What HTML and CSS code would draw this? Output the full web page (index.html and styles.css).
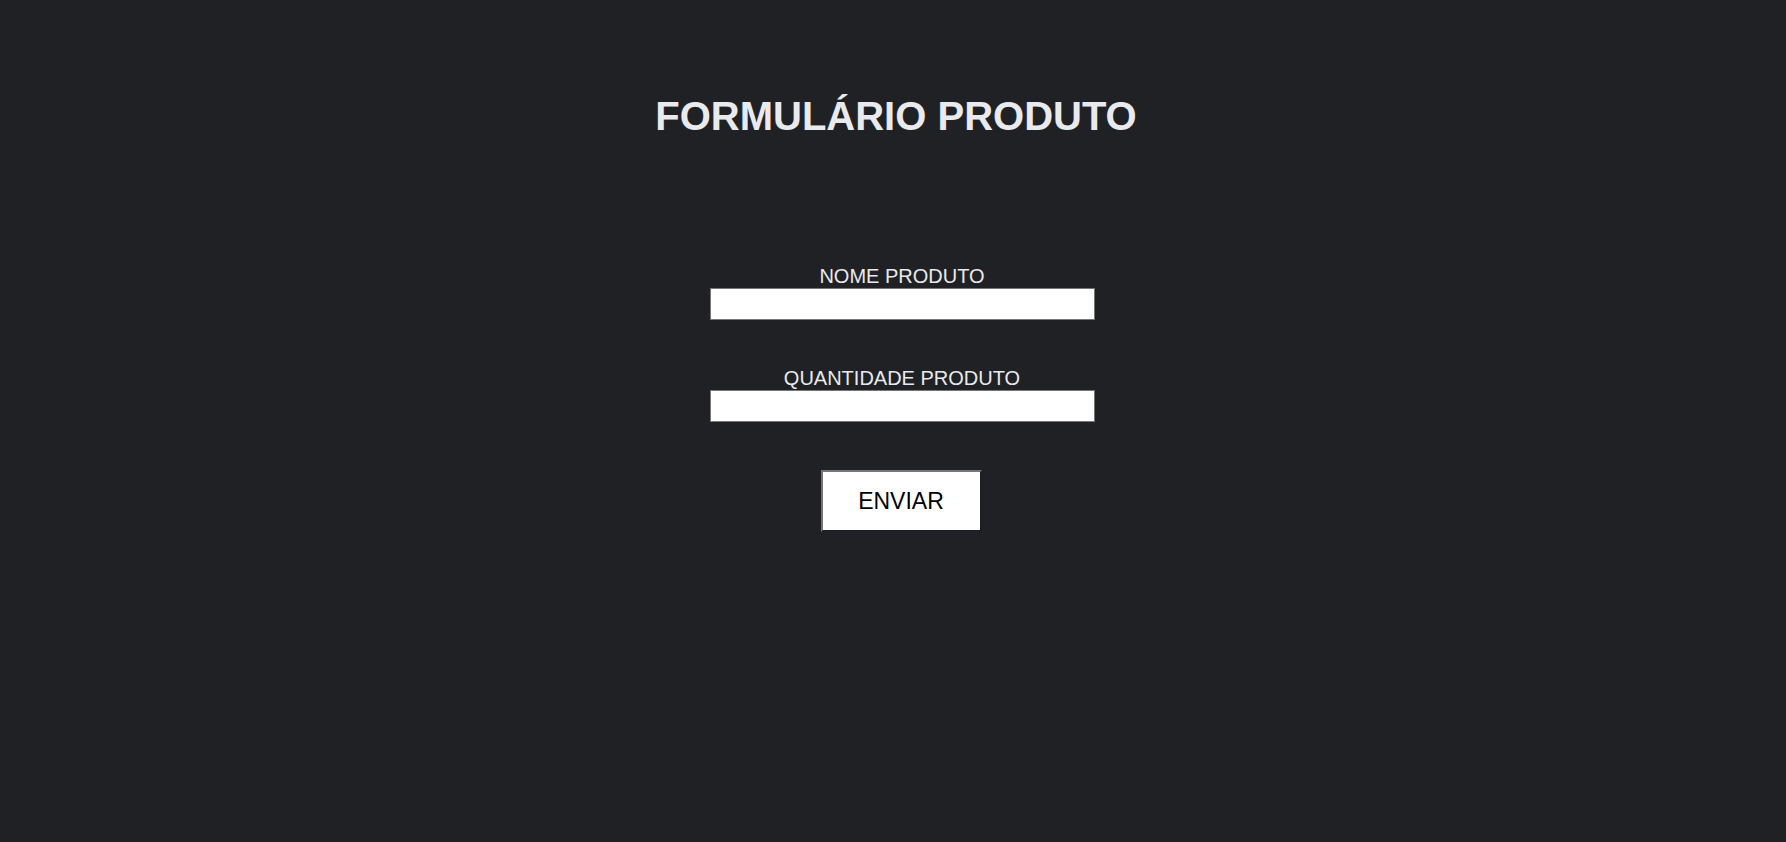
FILE: index.html
```html
<!DOCTYPE html>
<html lang="pt-BR">
<head>
<meta charset="utf-8">
<title>Formulário Produto</title>
<link rel="stylesheet" href="styles.css">
</head>
<body>
<main class="page">
  <h1 class="title">FORMULÁRIO PRODUTO</h1>
  <form class="form">
    <div class="field">
      <label class="label" for="nome">NOME PRODUTO</label>
      <input class="input" type="text" id="nome">
    </div>
    <div class="field">
      <label class="label" for="qtd">QUANTIDADE PRODUTO</label>
      <input class="input" type="text" id="qtd">
    </div>
    <button class="button" type="button">ENVIAR</button>
  </form>
</main>
</body>
</html>
```
FILE: styles.css
```css
html, body {
  margin: 0;
  padding: 0;
  background: #202124;
  height: 100%;
}
body {
  font-family: "Liberation Sans", Arial, sans-serif;
  color: #e8eaed;
}
.page {
  display: flex;
  flex-direction: column;
  align-items: center;
  padding-top: 94px;
  padding-left: 6px;
}
.title {
  margin: 0;
  font-size: 40px;
  line-height: 45px;
  font-weight: bold;
}
.form {
  margin-top: 126px;
  display: flex;
  flex-direction: column;
  align-items: center;
  gap: 47px;
  padding-left: 12px;
}
.field {
  display: flex;
  flex-direction: column;
  align-items: center;
}
.label {
  font-size: 20px;
  line-height: 23px;
}
.input {
  box-sizing: border-box;
  width: 385px;
  height: 32px;
  margin: 0;
  border: 1px solid #767676;
  background: #ffffff;
  outline: none;
}
.button {
  box-sizing: border-box;
  margin-top: 1px;
  margin-right: 2px;
  width: 161px;
  height: 62px;
  background: #ffffff;
  color: #000000;
  font-family: "Liberation Sans", Arial, sans-serif;
  font-size: 23px;
  border-style: solid;
  border-width: 2px;
  border-color: #767676 #1d1e21 #1d1e21 #767676;
  padding: 0;
}
```
